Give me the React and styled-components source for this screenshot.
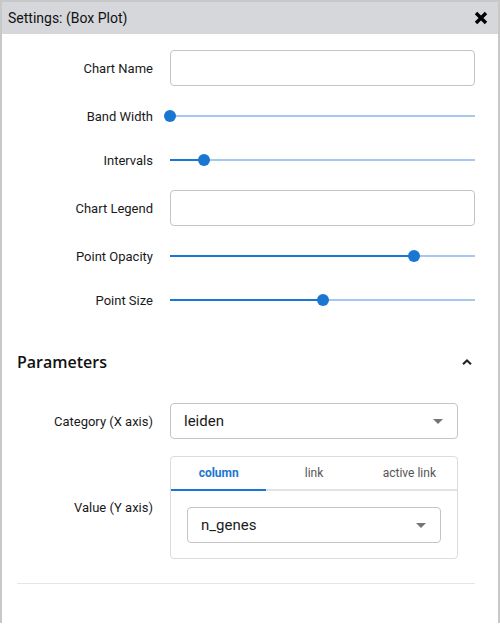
import React from "react";
import styled, { createGlobalStyle } from "styled-components";

const Global = createGlobalStyle`
  body {
    margin: 0;
    background: #ffffff;
    font-family: Roboto, "Liberation Sans", sans-serif;
  }
`;

const Panel = styled.div`
  width: 500px;
  height: 623px;
  box-sizing: border-box;
  border: 2px solid #c8c8c8;
  border-bottom: none;
  display: flex;
  flex-direction: column;
  background: #ffffff;
`;

const Header = styled.div`
  height: 32px;
  flex-shrink: 0;
  background: #d6d7da;
  display: flex;
  align-items: center;
  justify-content: space-between;
  padding: 0 10px 0 6px;
  font-size: 14px;
  color: #111111;
`;

const CloseButton = styled.button`
  border: none;
  background: none;
  padding: 0;
  display: flex;
  cursor: pointer;
`;

const Body = styled.div`
  padding: 16px 23px 0 15px;
  display: flex;
  flex-direction: column;
`;

const Form = styled.div`
  display: grid;
  grid-template-columns: 136px 1fr;
  column-gap: 17px;
  row-gap: 16px;
  align-items: center;
`;

const Label = styled.label`
  text-align: right;
  font-size: 13px;
  color: #1a1a1a;
`;

const TextInput = styled.input`
  height: 36px;
  box-sizing: border-box;
  width: 100%;
  border: 1px solid #c4c4c4;
  border-radius: 4px;
  padding: 0 12px;
  font: inherit;
  font-size: 14px;
  outline: none;
`;

const SliderWrap = styled.div`
  position: relative;
  height: 28px;
  display: flex;
  align-items: center;
`;

const Track = styled.div`
  position: relative;
  width: 100%;
  height: 2px;
  background: #a7c8ee;
`;

const Fill = styled.div`
  height: 100%;
  background: #1976d2;
`;

const Thumb = styled.div`
  position: absolute;
  top: 50%;
  width: 12px;
  height: 12px;
  border-radius: 50%;
  background: #1976d2;
  transform: translate(-50%, -50%);
`;

const Section = styled.div`
  margin-top: 32px;
`;

const SectionHead = styled.div`
  height: 32px;
  display: flex;
  align-items: center;
  justify-content: space-between;
  padding: 0 2px 0 0;
`;

const SectionTitle = styled.h2`
  margin: 0;
  font-family: "Open Sans", "Noto Sans", sans-serif;
  font-size: 16px;
  font-weight: 600;
  color: #111111;
`;

const ParamForm = styled(Form)`
  margin-top: 25px;
  row-gap: 17px;
  grid-template-columns: 136px 288px;
`;

const Select = styled.div`
  height: 36px;
  box-sizing: border-box;
  border: 1px solid #c4c4c4;
  border-radius: 4px;
  display: flex;
  align-items: center;
  justify-content: space-between;
  padding: 0 14px 0 13px;
  font-size: 15px;
  color: #1a1a1a;
`;

const Caret = styled.span`
  width: 0;
  height: 0;
  border-left: 5px solid transparent;
  border-right: 5px solid transparent;
  border-top: 5px solid #757575;
`;

const Card = styled.div`
  border: 1px solid #dcdcdc;
  border-radius: 4px;
`;

const Tabs = styled.div`
  display: grid;
  grid-template-columns: repeat(3, 1fr);
  border-bottom: 2px solid #e2e2e2;
`;

const Tab = styled.div`
  height: 32px;
  display: flex;
  align-items: center;
  justify-content: center;
  font-size: 12px;
  font-weight: ${(p) => (p.$active ? 700 : 400)};
  color: ${(p) => (p.$active ? "#1976d2" : "#555555")};
  margin-bottom: -2px;
  border-bottom: 2px solid ${(p) => (p.$active ? "#1976d2" : "transparent")};
`;

const CardBody = styled.div`
  padding: 16px 16px 15px;
`;

const Divider = styled.hr`
  margin: 24px 0 0 0;
  border: none;
  border-top: 1px solid #dfe6ee;
`;

function Slider({ value }) {
  return (
    <SliderWrap>
      <Track>
        <Fill style={{ width: `${value}%` }} />
        <Thumb style={{ left: `${value}%` }} />
      </Track>
    </SliderWrap>
  );
}

function CloseIcon() {
  return (
    <svg width="14" height="14" viewBox="0 0 14 14">
      <path d="M2 2 L12 12 M12 2 L2 12" stroke="#000" strokeWidth="3.4" strokeLinecap="butt" />
    </svg>
  );
}

function ChevronUp() {
  return (
    <svg width="12" height="12" viewBox="0 0 12 12">
      <path d="M2 8.2 L6 4.4 L10 8.2" stroke="#222" strokeWidth="2" fill="none" />
    </svg>
  );
}

export default function App() {
  return (
    <>
      <Global />
      <Panel>
        <Header>
          <span>Settings: (Box Plot)</span>
          <CloseButton>
            <CloseIcon />
          </CloseButton>
        </Header>
        <Body>
          <Form>
            <Label>Chart Name</Label>
            <TextInput />
            <Label>Band Width</Label>
            <Slider value={0} />
            <Label>Intervals</Label>
            <Slider value={11} />
            <Label>Chart Legend</Label>
            <TextInput />
            <Label>Point Opacity</Label>
            <Slider value={80} />
            <Label>Point Size</Label>
            <Slider value={50} />
          </Form>
          <Section>
            <SectionHead>
              <SectionTitle>Parameters</SectionTitle>
              <ChevronUp />
            </SectionHead>
            <ParamForm>
              <Label>Category (X axis)</Label>
              <Select>
                <span>leiden</span>
                <Caret />
              </Select>
              <Label>Value (Y axis)</Label>
              <Card>
                <Tabs>
                  <Tab $active>column</Tab>
                  <Tab>link</Tab>
                  <Tab>active link</Tab>
                </Tabs>
                <CardBody>
                  <Select>
                    <span>n_genes</span>
                    <Caret />
                  </Select>
                </CardBody>
              </Card>
            </ParamForm>
          </Section>
          <Divider />
        </Body>
      </Panel>
    </>
  );
}
